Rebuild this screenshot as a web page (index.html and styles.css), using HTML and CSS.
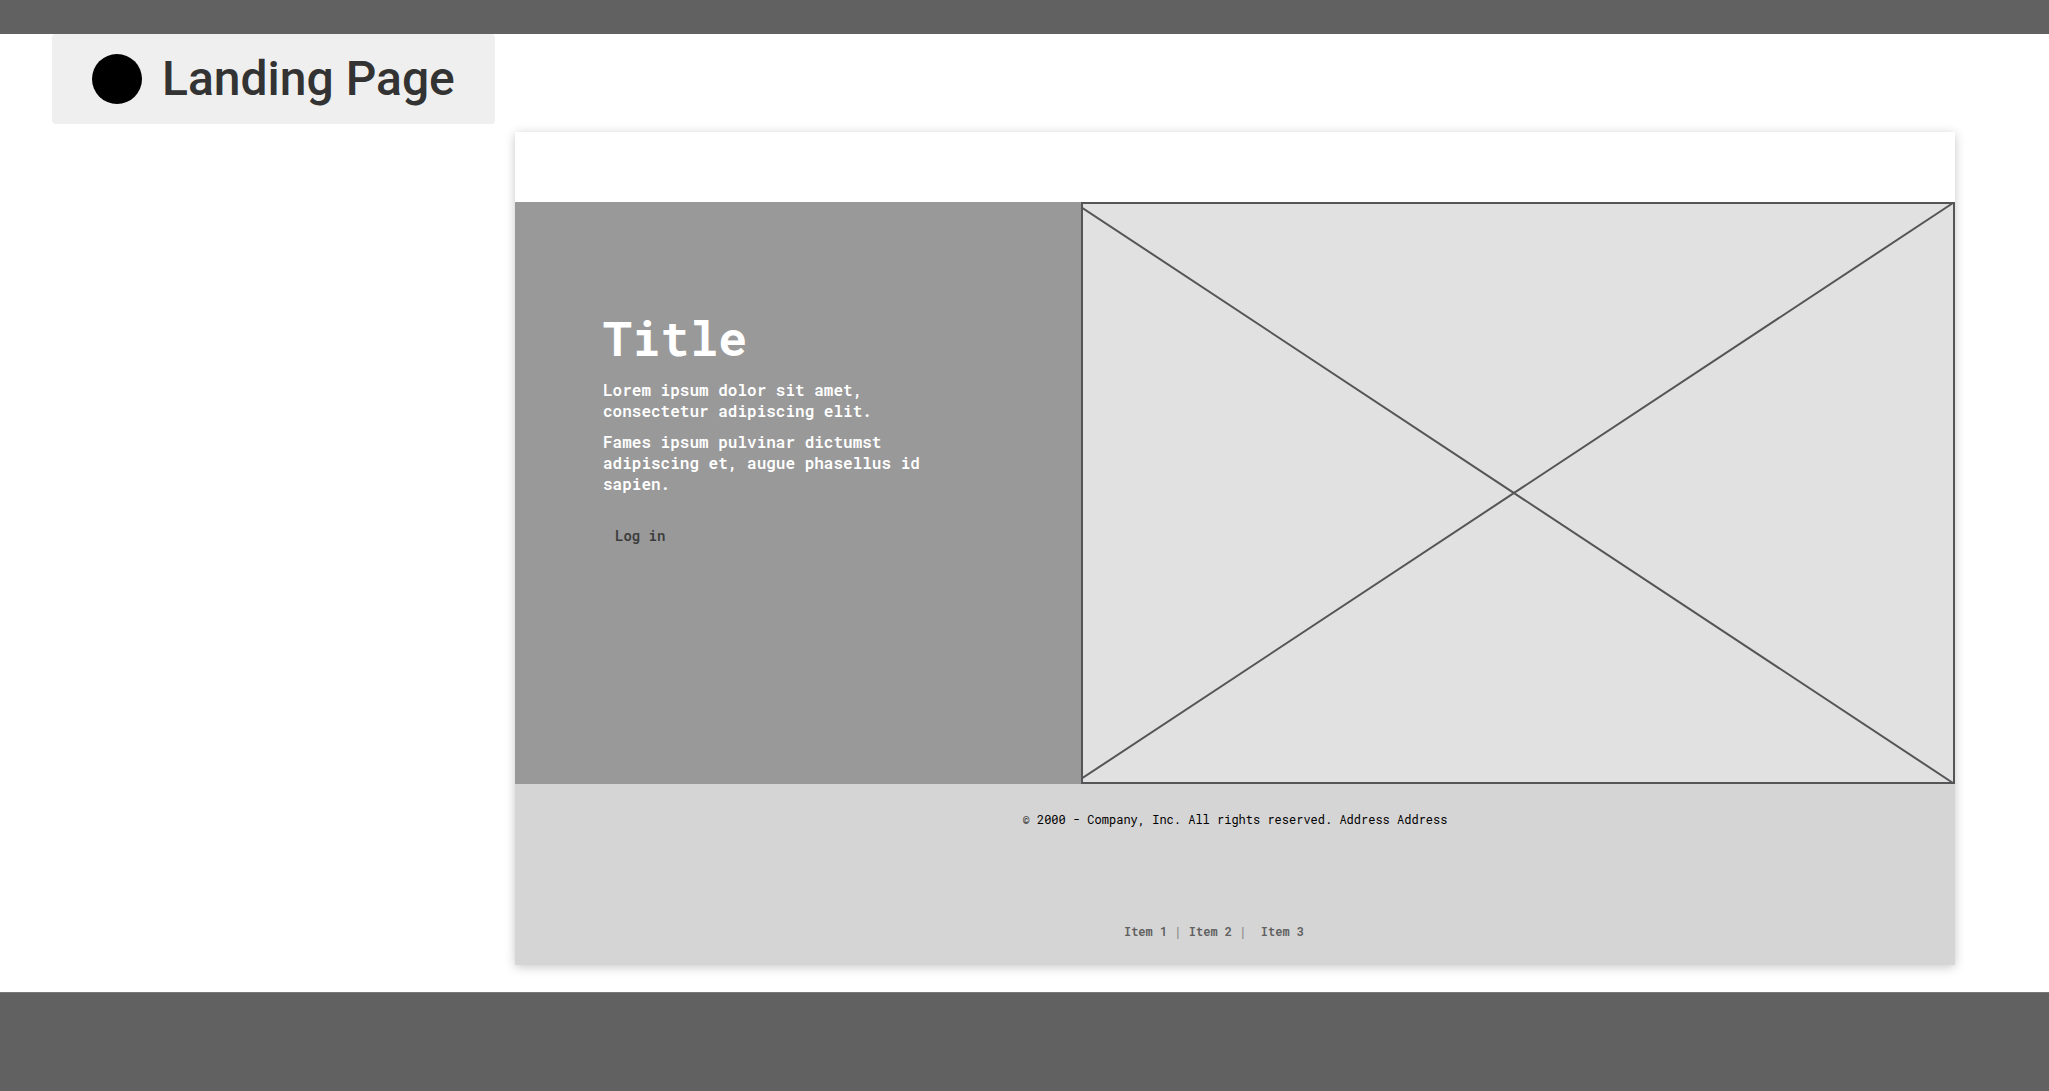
FILE: index.html
```html
<!DOCTYPE html>
<html lang="en">
<head>
<meta charset="utf-8">
<meta name="viewport" content="width=device-width, initial-scale=1">
<title>Landing Page</title>
<link rel="stylesheet" href="styles.css">
</head>
<body>
<div class="band band-top"></div>
<main class="board">
  <header class="tag">
    <span class="tag-dot"></span>
    <h1 class="tag-label">Landing Page</h1>
  </header>
  <article class="frame">
    <div class="frame-nav"></div>
    <section class="hero">
      <div class="hero-copy">
        <h2 class="hero-title">Title</h2>
        <p class="hero-text">Lorem ipsum dolor sit amet, consectetur adipiscing elit.</p>
        <p class="hero-text">Fames ipsum pulvinar dictumst adipiscing et, augue phasellus id sapien.</p>
        <button class="login" type="button">Log in</button>
      </div>
      <svg class="placeholder" viewBox="0 0 874 582" preserveAspectRatio="none" aria-hidden="true">
        <rect x="1" y="1" width="872" height="580" fill="#e1e1e1" stroke="#555557" stroke-width="2"/>
        <path d="M0 5 L872 581 M0 577 L872 1" fill="none" stroke="#555557" stroke-width="2"/>
      </svg>
    </section>
    <footer class="footer">
      <p class="legal">© 2000 - Company, Inc. All rights reserved. Address Address</p>
      <nav class="links"><a href="#">Item 1</a> | <a href="#">Item 2</a> |  <a href="#">Item 3</a></nav>
    </footer>
  </article>
</main>
<div class="band band-bottom"></div>
</body>
</html>
```
FILE: styles.css
```css
* {
  box-sizing: border-box;
}

body {
  margin: 0;
  min-height: 100vh;
  display: flex;
  flex-direction: column;
  background: #fff;
  font-family: "Roboto Mono", "DejaVu Sans Mono", monospace;
}

h1, h2, p {
  margin: 0;
}

.band {
  background: #616161;
}

.band-top {
  height: 34px;
}

.band-bottom {
  flex: 1;
  border-top: 1px solid #777;
}

.board {
  display: flex;
  flex-direction: column;
  gap: 8px;
  padding: 0 94px 27px 52px;
}

.tag {
  align-self: flex-start;
  display: flex;
  align-items: center;
  gap: 20px;
  height: 90px;
  padding: 0 40px;
  border-radius: 4px;
  background: #efefef;
}

.tag-dot {
  width: 50px;
  height: 50px;
  border-radius: 50%;
  background: #000;
}

.tag-label {
  font: 500 48px/56px Roboto, sans-serif;
  color: #333;
}

.frame {
  margin-left: 463px;
  box-shadow: 0 2px 10px rgba(0, 0, 0, 0.22);
}

.frame-nav {
  height: 70px;
  background: #fff;
}

.hero {
  display: grid;
  grid-template-columns: 566fr 874fr;
  background: #999;
}

.hero-copy {
  display: flex;
  flex-direction: column;
  align-items: flex-start;
  gap: 10px;
  padding: 104px 88px;
}

.hero-title {
  font-size: 48px;
  line-height: 63px;
  font-weight: 700;
  color: #fff;
}

.hero-text {
  max-width: 336px;
  font-size: 16px;
  line-height: 21px;
  font-weight: 600;
  color: #fff;
}

.login {
  margin-top: 15px;
  padding: 8px 12px;
  border: 0;
  background: transparent;
  font: 600 14px/18px "Roboto Mono", "DejaVu Sans Mono", monospace;
  color: #3c3c3c;
  cursor: pointer;
}

.placeholder {
  display: block;
  width: 100%;
  height: auto;
}

.footer {
  display: flex;
  flex-direction: column;
  align-items: center;
  gap: 96px;
  padding: 27px 0 26px;
  background: #d5d5d5;
  font-size: 12px;
  line-height: 16px;
}

.legal {
  color: #000;
}

.links {
  padding-right: 42px;
  white-space: pre;
  color: #777;
}

.links a {
  font-weight: 600;
  color: #606060;
  text-decoration: none;
}
```
